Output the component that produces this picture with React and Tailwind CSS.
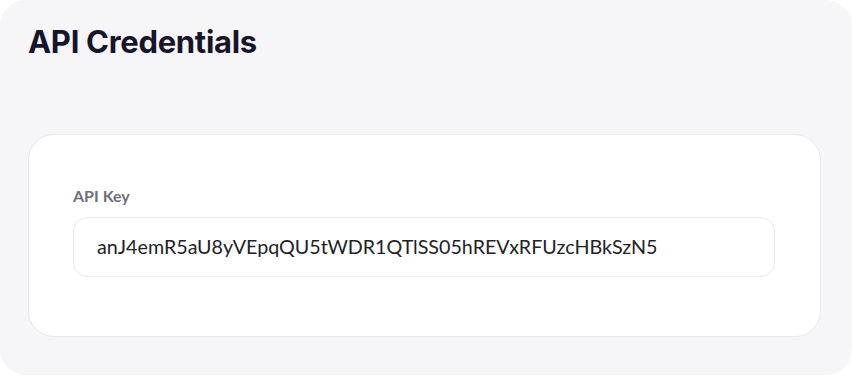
export default function App() {
  return (
    <div className="w-[852px] h-[376px] bg-white">
      <div className="h-[375px] rounded-[26px] bg-[#f6f6f8] pl-[28px] pr-[31px] pt-[24px]">
        <h1
          className="text-[31px] leading-[36px] font-bold tracking-[-0.3px] text-[#16152b]"
          style={{ fontFamily: "Inter, 'Noto Sans', sans-serif" }}
        >
          API Credentials
        </h1>
        <div
          className="mt-[74px] h-[203px] rounded-[26px] border border-[#e9e9ee] bg-white pl-[44px] pr-[45px] pt-[51px]"
          style={{ fontFamily: "Lato, 'Noto Sans', sans-serif" }}
        >
          <label className="block text-[16px] leading-[20px] font-bold text-[#6f6e7b]">
            API Key
          </label>
          <div className="mt-[11px] h-[60px] flex items-center rounded-[14px] border border-[#ebebef] px-[23px]">
            <span className="text-[19.7px] text-[#222226]">
              anJ4emR5aU8yVEpqQU5tWDR1QTlSS05hREVxRFUzcHBkSzN5
            </span>
          </div>
        </div>
      </div>
    </div>
  );
}
